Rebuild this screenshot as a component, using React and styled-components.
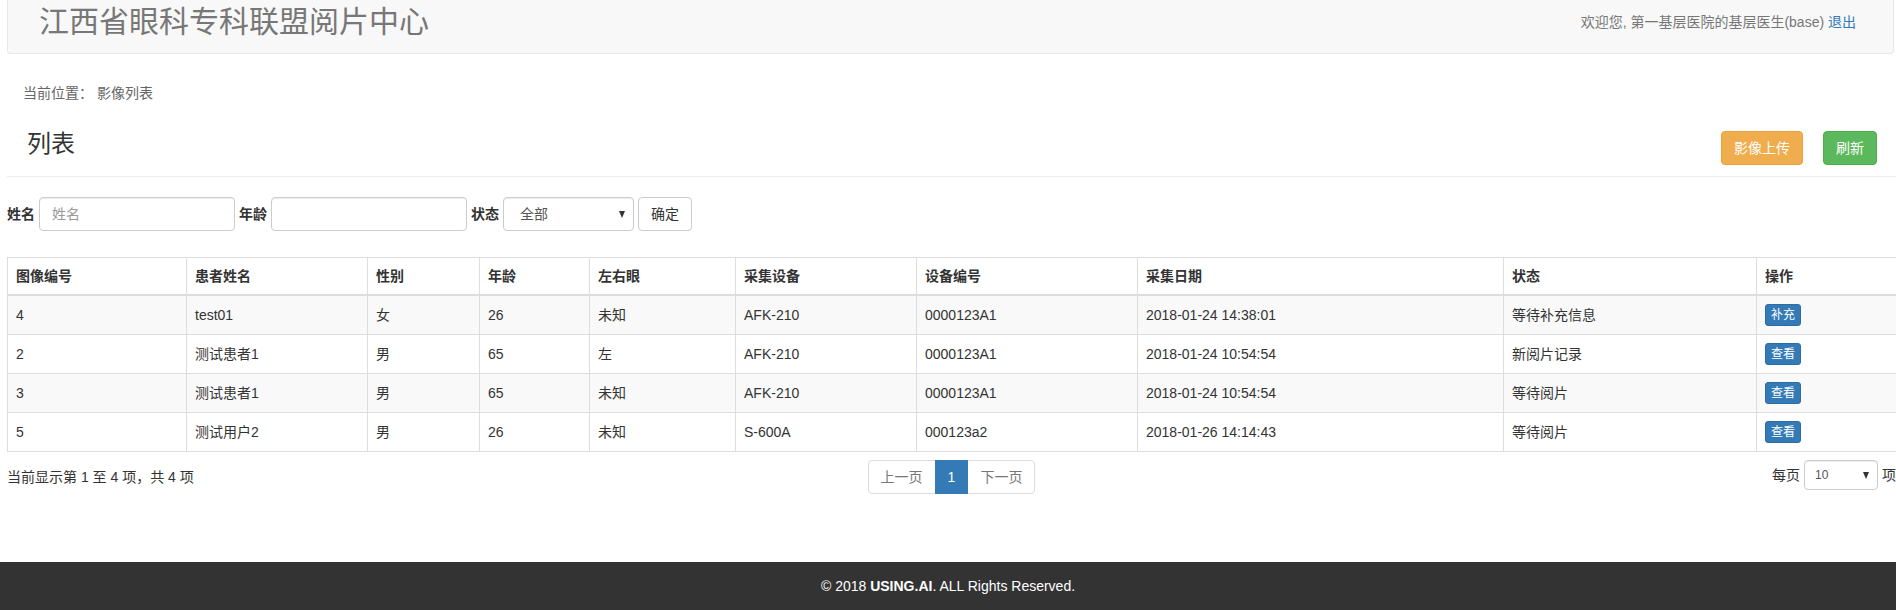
import React from 'react'
import styled, { createGlobalStyle } from 'styled-components'

const GlobalStyle = createGlobalStyle`
  html, body {
    margin: 0;
    padding: 0;
  }
  body {
    font-family: "Liberation Sans", "Noto Sans CJK SC", sans-serif;
    font-size: 14px;
    line-height: 20px;
    color: #333;
    background: #fff;
    overflow-x: hidden;
  }
  * {
    box-sizing: border-box;
  }
`

const rows = [
  ['4', 'test01', '女', '26', '未知', 'AFK-210', '0000123A1', '2018-01-24 14:38:01', '等待补充信息', '补充'],
  ['2', '测试患者1', '男', '65', '左', 'AFK-210', '0000123A1', '2018-01-24 10:54:54', '新阅片记录', '查看'],
  ['3', '测试患者1', '男', '65', '未知', 'AFK-210', '0000123A1', '2018-01-24 10:54:54', '等待阅片', '查看'],
  ['5', '测试用户2', '男', '26', '未知', 'S-600A', '000123a2', '2018-01-26 14:14:43', '等待阅片', '查看'],
]

const columns = [
  ['图像编号', 179],
  ['患者姓名', 181],
  ['性别', 112],
  ['年龄', 110],
  ['左右眼', 146],
  ['采集设备', 181],
  ['设备编号', 221],
  ['采集日期', 366],
  ['状态', 253],
  ['操作', 140],
]

const App = () => {
  return (
    <Page>
      <GlobalStyle />
      <Navbar>
        <Brand>江西省眼科专科联盟阅片中心</Brand>
        <Welcome>
          欢迎您, 第一基层医院的基层医生(base) <Logout href="#">退出</Logout>
        </Welcome>
      </Navbar>

      <Main>
        <Crumb>当前位置： 影像列表</Crumb>

        <HeaderRow>
          <Title>列表</Title>
          <Actions>
            <Button $variant="warning">影像上传</Button>
            <Button $variant="success">刷新</Button>
          </Actions>
        </HeaderRow>
        <Divider />

        <Filter>
          <Label>姓名</Label>
          <Input placeholder="姓名" $width={196} />
          <Label>年龄</Label>
          <Input $width={196} />
          <Label>状态</Label>
          <SelectBox $width={131} $height={34}>
            <span>全部</span>
            <Caret />
          </SelectBox>
          <Button $variant="default">确定</Button>
        </Filter>

        <Table>
          <colgroup>
            {columns.map(([name, w]) => (
              <col key={name} style={{ width: w }} />
            ))}
          </colgroup>
          <thead>
            <tr>
              {columns.map(([name]) => (
                <Th key={name}>{name}</Th>
              ))}
            </tr>
          </thead>
          <tbody>
            {rows.map((r, i) => (
              <Tr key={i} $odd={i % 2 === 0}>
                {r.slice(0, 9).map((c, j) => (
                  <Td key={j}>{c}</Td>
                ))}
                <Td>
                  <XsButton>{r[9]}</XsButton>
                </Td>
              </Tr>
            ))}
          </tbody>
        </Table>

        <BottomBar>
          <Summary>当前显示第 1 至 4 项，共 4 项</Summary>
          <Pager>
            <PageItem $first>上一页</PageItem>
            <PageItem $active>1</PageItem>
            <PageItem $last>下一页</PageItem>
          </Pager>
          <PerPage>
            每页
            <SelectBox $width={74} $height={30} $small>
              <span>10</span>
              <Caret />
            </SelectBox>
            项
          </PerPage>
        </BottomBar>
      </Main>

      <Footer>
        © 2018 <b>USING.AI</b>. ALL Rights Reserved.
      </Footer>
    </Page>
  )
}

export default App

const Page = styled.div`
  height: 100vh;
  display: flex;
  flex-direction: column;
  overflow: hidden;
`

const Navbar = styled.div`
  flex: none;
  height: 54px;
  margin: 0 2px 0 7px;
  padding: 0 37px 9px 31px;
  display: flex;
  justify-content: space-between;
  align-items: center;
  background: #f8f8f8;
  border: 1px solid #e7e7e7;
  border-top: none;
  border-radius: 0 0 4px 4px;
`

const Brand = styled.div`
  font-size: 30px;
  line-height: 44px;
  color: #777;
`

const Welcome = styled.div`
  color: #777;
  font-size: 14px;
`

const Logout = styled.a`
  color: #337ab7;
  text-decoration: none;
`

const Main = styled.div`
  flex: none;
  margin: 0 0 0 7px;
`

const Crumb = styled.div`
  margin-top: 29px;
  padding-left: 16px;
  color: #666;
`

const HeaderRow = styled.div`
  margin-top: 28px;
  padding: 0 19px 0 20px;
  height: 34px;
  display: flex;
  justify-content: space-between;
  align-items: flex-start;
`

const Title = styled.h2`
  margin: 0;
  font-size: 24px;
  font-weight: 400;
  line-height: 26px;
  color: #333;
`

const Actions = styled.div`
  display: flex;
  gap: 20px;
`

const variants = {
  warning: 'background:#f0ad4e;border-color:#eea236;color:#fff;',
  success: 'background:#5cb85c;border-color:#4cae4c;color:#fff;',
  default: 'background:#fff;border-color:#ccc;color:#333;',
}

const Button = styled.button`
  font-family: inherit;
  font-size: 14px;
  line-height: 20px;
  padding: 6px 12px;
  border: 1px solid;
  border-radius: 4px;
  cursor: pointer;
  ${(p) => variants[p.$variant]}
`

const Divider = styled.div`
  margin-top: 11px;
  border-top: 1px solid #eee;
`

const Filter = styled.div`
  margin-top: 20px;
  display: flex;
  align-items: center;
  gap: 4px;
`

const Label = styled.label`
  font-weight: 700;
`

const Input = styled.input`
  width: ${(p) => p.$width}px;
  height: 34px;
  padding: 6px 12px;
  font-family: inherit;
  font-size: 14px;
  color: #555;
  border: 1px solid #ccc;
  border-radius: 4px;
  box-shadow: inset 0 1px 1px rgba(0, 0, 0, 0.075);
  outline: none;

  &::placeholder {
    color: #999;
  }
`

const SelectBox = styled.div`
  position: relative;
  width: ${(p) => p.$width}px;
  height: ${(p) => p.$height}px;
  padding: 0 ${(p) => (p.$small ? '10px' : '16px')};
  display: flex;
  align-items: center;
  font-size: ${(p) => (p.$small ? '12px' : '14px')};
  color: #555;
  background: #fff;
  border: 1px solid #ccc;
  border-radius: 4px;
  box-shadow: inset 0 1px 1px rgba(0, 0, 0, 0.075);
`

const Caret = styled.i`
  position: absolute;
  right: 8px;
  top: 50%;
  margin-top: -3px;
  border-left: 3.5px solid transparent;
  border-right: 3.5px solid transparent;
  border-top: 7px solid #333;
`

const Table = styled.table`
  margin-top: 26px;
  width: 100%;
  border-collapse: collapse;
  table-layout: fixed;
`

const Th = styled.th`
  text-align: left;
  font-weight: 700;
  padding: 8px;
  line-height: 20px;
  border: 1px solid #ddd;
  border-bottom-width: 2px;
  white-space: nowrap;
`

const Tr = styled.tr`
  height: 39px;
  background: ${(p) => (p.$odd ? '#f9f9f9' : '#fff')};
`

const Td = styled.td`
  padding: 0 8px;
  line-height: 20px;
  border: 1px solid #ddd;
  white-space: nowrap;
  vertical-align: middle;
`

const XsButton = styled.button`
  display: inline-block;
  vertical-align: top;
  font-family: inherit;
  font-size: 12px;
  line-height: 18px;
  padding: 1px 5px;
  color: #fff;
  background: #337ab7;
  border: 1px solid #2e6da4;
  border-radius: 3px;
`

const BottomBar = styled.div`
  margin-top: 8px;
  display: grid;
  grid-template-columns: 1fr auto 1fr;
  align-items: center;
`

const Summary = styled.div`
  color: #333;
`

const Pager = styled.div`
  display: flex;
`

const PageItem = styled.span`
  padding: 6px 12px;
  line-height: 20px;
  border: 1px solid ${(p) => (p.$active ? '#337ab7' : '#ddd')};
  margin-left: ${(p) => (p.$first ? '0' : '-1px')};
  color: ${(p) => (p.$active ? '#fff' : '#777')};
  background: ${(p) => (p.$active ? '#337ab7' : '#fff')};
  border-radius: ${(p) => (p.$first ? '4px 0 0 4px' : p.$last ? '0 4px 4px 0' : '0')};
  position: relative;
  z-index: ${(p) => (p.$active ? 1 : 0)};
`

const PerPage = styled.div`
  justify-self: end;
  display: flex;
  align-items: center;
  gap: 4px;
  margin-top: -4px;
`

const Footer = styled.div`
  flex: none;
  margin-top: auto;
  padding: 14px 0;
  line-height: 20px;
  text-align: center;
  color: #fff;
  background: #333;
`
